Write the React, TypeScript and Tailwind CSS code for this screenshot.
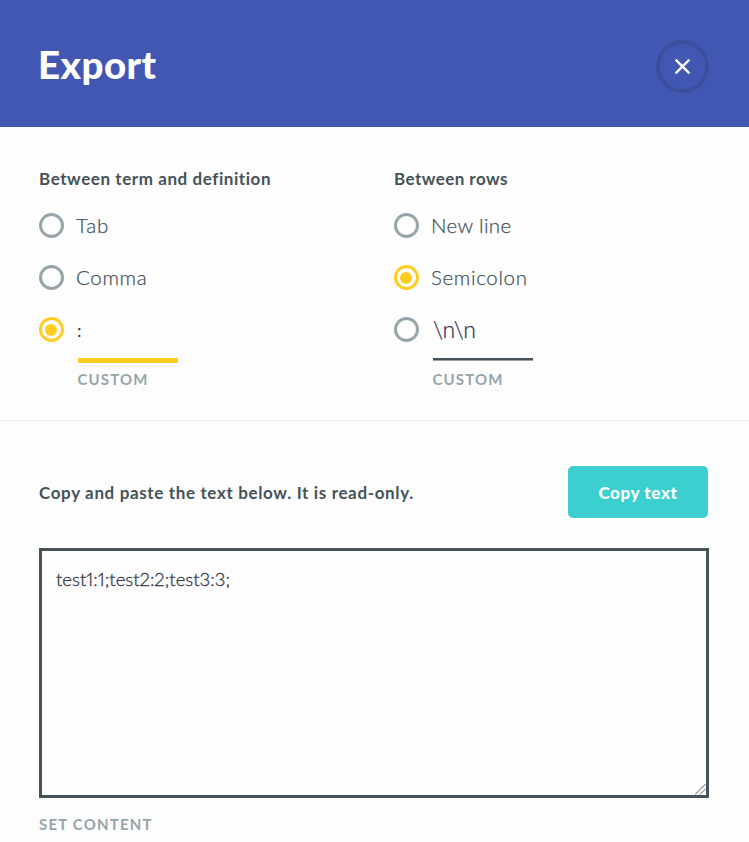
import React from "react";

function Radio({ checked }: { checked?: boolean }) {
  return (
    <span
      className={
        "flex h-[25px] w-[25px] shrink-0 items-center justify-center rounded-full border-[3px] " +
        (checked ? "border-[#ffcd1f]" : "border-[#97a5aa]")
      }
    >
      {checked && <span className="mr-px h-3 w-3 rounded-full bg-[#ffcd1f]" />}
    </span>
  );
}

function Option({ label, checked, spacing }: { label: string; checked?: boolean; spacing: string }) {
  return (
    <label className="mb-[27px] flex h-[25px] items-center gap-3">
      <Radio checked={checked} />
      <span
        className={
          "-mt-px text-[20.5px] leading-[25px] font-light whitespace-nowrap [-webkit-text-stroke:0.25px_#455358] " +
          spacing
        }
      >
        {label}
      </span>
    </label>
  );
}

function CustomOption({ value, checked }: { value: string; checked?: boolean }) {
  return (
    <div className="flex gap-[14px]">
      <Radio checked={checked} />
      <div className="w-[100px]">
        <div
          className={
            "h-[41px] whitespace-nowrap text-[#303545] " +
            (checked
              ? "-ml-px text-[18px] leading-[27px]"
              : "text-[23px] leading-[25px] font-light tracking-[-0.5px] [-webkit-text-stroke:0.25px_#303545]")
          }
        >
          {value}
        </div>
        <div className="h-[5px]">
          <div className={checked ? "h-[5px] bg-[#ffcd1f]" : "h-[3px] border-b border-[#97a5aa] bg-[#455358]"} />
        </div>
        <div className="mt-[6px] -ml-[0.5px] text-[15px] leading-5 font-bold tracking-[1.15px] text-[#97a5aa]">
          CUSTOM
        </div>
      </div>
    </div>
  );
}

export default function App() {
  return (
    <div className="h-[842px] w-[749px] overflow-hidden bg-[#fdfdfd] font-['Lato','Liberation_Sans',sans-serif] text-[#455358]">
      <header className="flex h-[127px] items-start justify-between bg-[#4257b2] pr-10 pl-[38px]">
        <h1 className="mt-[39px] text-[38.5px] leading-[50px] font-black tracking-[0.45px] text-white">Export</h1>
        <button className="mt-10 flex h-[53px] w-[53px] items-center justify-center rounded-full border-4 border-[#3c4f9c]">
          <svg width="17" height="17" viewBox="0 0 17 17" fill="none" stroke="white" strokeWidth="2.3">
            <path d="M1.6 1.6 15.4 15.4M15.4 1.6 1.6 15.4" />
          </svg>
        </button>
      </header>
      <section className="flex h-[294px] border-b border-[#ebecec] pl-[39px]">
        <div className="w-[355px] pt-[42px]">
          <h2 className="mb-[24px] text-[17px] leading-5 font-bold tracking-[0.57px]">Between term and definition</h2>
          <Option label="Tab" spacing="tracking-[0.8px]" />
          <Option label="Comma" spacing="tracking-[0.65px]" />
          <CustomOption value=":" checked />
        </div>
        <div className="pt-[42px]">
          <h2 className="mb-[24px] text-[17px] leading-5 font-bold tracking-[0.45px]">Between rows</h2>
          <Option label="New line" spacing="tracking-[0.35px]" />
          <Option label="Semicolon" spacing="tracking-[0.65px]" checked />
          <CustomOption value="\n\n" />
        </div>
      </section>
      <section className="pt-[45px] pr-10 pl-[39px]">
        <div className="mb-[30px] flex h-[52px] items-center justify-between pr-px">
          <p className="mt-[2px] text-[17px] font-bold tracking-[0.64px]">
            Copy and paste the text below. It is read-only.
          </p>
          <button className="h-[52px] w-[140px] rounded-[5px] bg-[#3ccfcf] pt-[2px] text-[17px] font-black tracking-[0.6px] text-white">
            Copy text
          </button>
        </div>
        <div className="relative">
          <textarea
            readOnly
            className="block h-[250px] w-[670px] resize-none border-[3px] border-[#455358] bg-[#fdfdfd] px-[14px] py-[15px] text-[18.5px] leading-[26px] font-light tracking-[0.02px] text-[#303545] proportional-nums outline-none [-webkit-text-stroke:0.3px_#303545]"
            value="test1:1;test2:2;test3:3;"
          />
          <svg
            className="absolute right-[3px] bottom-[3px]"
            width="11"
            height="11"
            viewBox="0 0 11 11"
            stroke="#5c5f66"
            strokeWidth="1"
          >
            <path d="M0 10.5 10.5 0M5 10.5 10.5 5" />
          </svg>
        </div>
        <div className="mt-[16px] text-[15px] leading-5 font-bold tracking-[1.2px] text-[#97a5aa]">SET CONTENT</div>
      </section>
    </div>
  );
}
